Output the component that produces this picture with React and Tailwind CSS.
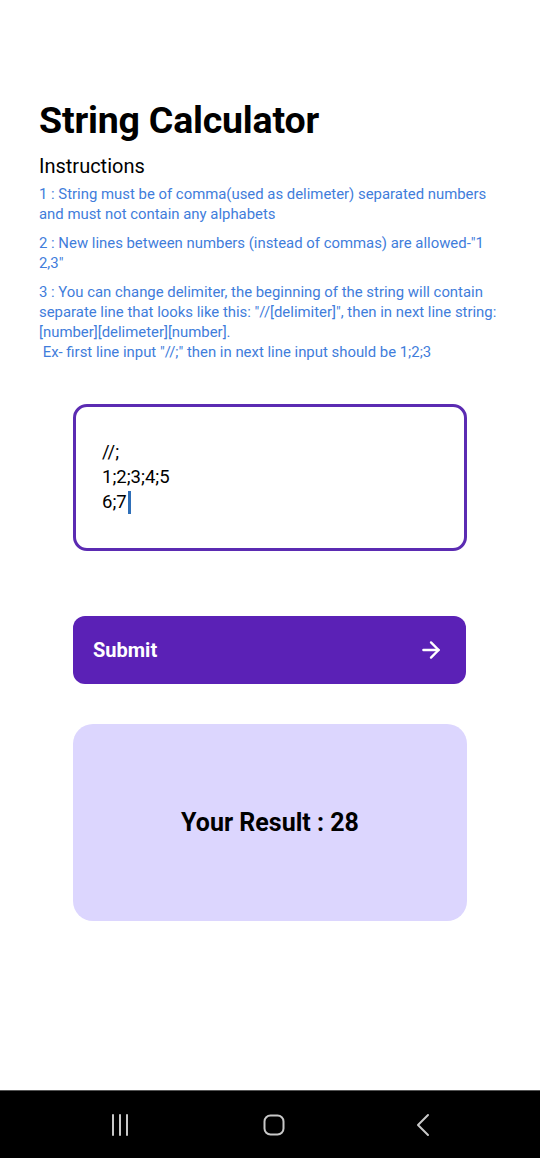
import { ArrowRight } from 'lucide-react'

const RULES = [
  '1 : String must be of comma(used as delimeter) separated numbers and must not contain any alphabets',
  '2 : New lines between numbers (instead of commas) are allowed-"1 2,3"',
]

export default function App() {
  return (
    <div className="w-[540px] h-[1158px] bg-white flex flex-col font-['Roboto',sans-serif] overflow-hidden">
      <div className="flex-1 px-[39px] pt-[98px]">
        {/* Header */}
        <h1 className="text-[37.5px] leading-[44px] font-bold text-black tracking-[-0.2px]">String Calculator</h1>
        <div className="mt-[12px] text-[20px] leading-[24px] text-black">Instructions</div>

        {/* Rules */}
        <div className="mt-[6px] text-[14.9px] leading-[20px] text-[#3f7ddb]">
          {RULES.map(r => (
            <p key={r} className="mb-[9px]">{r}</p>
          ))}
          <p>
            3 : You can change delimiter, the beginning of the string will contain separate line that looks like this: "//[delimiter]", then in next line string: [number][delimeter][number].
            <br />
            &nbsp;Ex- first line input "//;" then in next line input should be 1;2;3
          </p>
        </div>

        {/* Input box */}
        <div className="mt-[42px] mx-[34px] h-[147px] border-[3px] border-[#5b2bb2] rounded-[14px] pl-[26px] pt-[33px] text-[18.5px] leading-[25px] text-black">
          <div>//;</div>
          <div>1;2;3;4;5</div>
          <div className="flex items-center">
            6;7<span className="inline-block w-[3px] h-[23px] bg-[#2f6fb8] ml-[1px]"></span>
          </div>
        </div>

        {/* Submit */}
        <button className="mt-[65px] mx-[34px] w-[393px] h-[68px] bg-[#5b21b6] rounded-[12px] flex items-center justify-between pl-[20px] pr-[22px] text-white">
          <span className="text-[20px] font-bold">Submit</span>
          <ArrowRight className="w-[26px] h-[26px]" strokeWidth={2.2} />
        </button>

        {/* Result */}
        <div className="mt-[40px] mx-[34px] h-[197px] bg-[#dcd6fe] rounded-[20px] flex items-center justify-center">
          <span className="text-[25px] font-bold text-black">Your Result : 28</span>
        </div>
      </div>

      {/* Android nav bar */}
      <div className="h-[68px] bg-black border-t border-[#555] flex items-center justify-between pl-[109px] pr-[107px]">
        <svg width="22" height="24" viewBox="0 0 22 24">
          <g stroke="#c8c8c8" strokeWidth="2" strokeLinecap="round">
            <line x1="4" y1="2" x2="4" y2="22" />
            <line x1="11" y1="2" x2="11" y2="22" />
            <line x1="18" y1="2" x2="18" y2="22" />
          </g>
        </svg>
        <svg width="24" height="24" viewBox="0 0 24 24" className="ml-[3px]">
          <rect x="2.5" y="2.5" width="19" height="19" rx="6" fill="none" stroke="#c8c8c8" strokeWidth="2" />
        </svg>
        <svg width="20" height="24" viewBox="0 0 20 24">
          <polyline points="15,2 5,12 15,22" fill="none" stroke="#c8c8c8" strokeWidth="2" strokeLinecap="round" strokeLinejoin="round" />
        </svg>
      </div>
    </div>
  )
}
